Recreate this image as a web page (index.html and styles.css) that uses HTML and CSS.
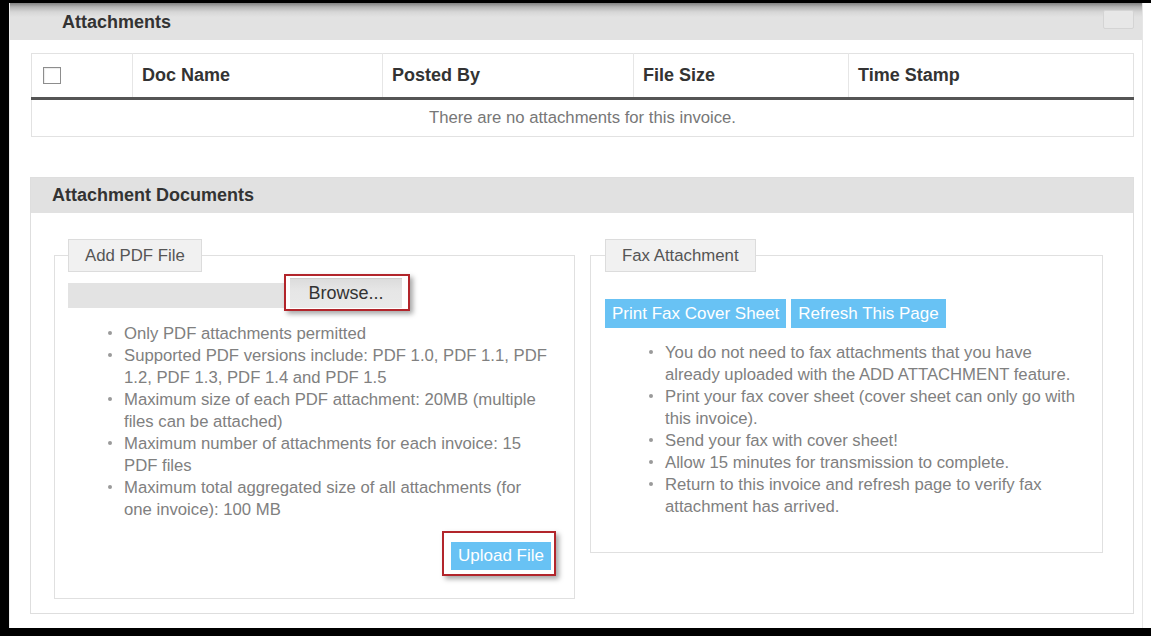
FILE: index.html
```html
<!DOCTYPE html>
<html lang="en">
<head>
<meta charset="utf-8">
<title>Invoice Attachments</title>
<link rel="stylesheet" href="styles.css">
</head>
<body>
<div class="screen">
  <div class="page">
    <section class="attachments">
      <header class="top-bar">
        <h2 class="top-title">Attachments</h2>
        <span class="collapse-btn"></span>
      </header>
      <div class="attachments-body">
        <table class="grid">
          <colgroup>
            <col class="c-check">
            <col class="c-name">
            <col class="c-posted">
            <col class="c-size">
            <col class="c-time">
          </colgroup>
          <thead>
            <tr>
              <th><span class="checkbox"></span></th>
              <th>Doc Name</th>
              <th>Posted By</th>
              <th>File Size</th>
              <th>Time Stamp</th>
            </tr>
          </thead>
          <tbody>
            <tr>
              <td colspan="5" class="empty">There are no attachments for this invoice.</td>
            </tr>
          </tbody>
        </table>
      </div>
    </section>

    <section class="panel">
      <header class="panel-head">
        <h2 class="panel-title">Attachment Documents</h2>
      </header>
      <div class="panel-body">
        <fieldset class="box box-pdf">
          <legend class="box-legend">Add PDF File</legend>
          <div class="file-row">
            <span class="file-name"></span>
            <span class="mark mark-browse"><button type="button" class="browse">Browse...</button></span>
          </div>
          <ul class="notes notes-pdf">
            <li>Only PDF attachments permitted</li>
            <li>Supported PDF versions include: PDF 1.0, PDF 1.1, PDF 1.2, PDF 1.3, PDF 1.4 and PDF 1.5</li>
            <li>Maximum size of each PDF attachment: 20MB (multiple files can be attached)</li>
            <li>Maximum number of attachments for each invoice: 15 PDF files</li>
            <li>Maximum total aggregated size of all attachments (for one invoice): 100 MB</li>
          </ul>
          <div class="actions">
            <span class="mark mark-upload"><button type="button" class="btn">Upload File</button></span>
          </div>
        </fieldset>

        <fieldset class="box box-fax">
          <legend class="box-legend">Fax Attachment</legend>
          <div class="fax-buttons">
            <button type="button" class="btn">Print Fax Cover Sheet</button>
            <button type="button" class="btn">Refresh This Page</button>
          </div>
          <ul class="notes notes-fax">
            <li>You do not need to fax attachments that you have already uploaded with the ADD ATTACHMENT feature.</li>
            <li>Print your fax cover sheet (cover sheet can only go with this invoice).</li>
            <li>Send your fax with cover sheet!</li>
            <li>Allow 15 minutes for transmission to complete.</li>
            <li>Return to this invoice and refresh page to verify fax attachment has arrived.</li>
          </ul>
        </fieldset>
      </div>
    </section>
  </div>
</div>
</body>
</html>
```

FILE: styles.css
```css
html,
body {
  margin: 0;
  padding: 0;
}

body {
  background: #000;
  font-family: "Liberation Sans", Arial, sans-serif;
  color: #333;
}

/* white sheet inside the dark frame */
.screen {
  margin: 3px 0 0 9px;
  height: 625px;
  background: #fff;
  overflow: hidden;
}

.page {
  width: 1134px;
  height: 100%;
  box-sizing: border-box;
  border-left: 1px solid #ececec;
  border-right: 1px solid #e6e6e6;
}

/* ---------- Attachments block ---------- */
.top-bar {
  height: 37px;
  display: flex;
  align-items: center;
  padding-left: 52px;
  background: linear-gradient(to bottom, #808080 0, #b5b5b5 4px, #d6d6d6 9px, #e2e2e2 14px, #e2e2e2 100%);
}

.top-title {
  margin: 0;
  font-size: 18px;
  font-weight: bold;
  color: #333;
  padding-top: 2px;
}

.collapse-btn {
  margin-left: auto;
  margin-right: 8px;
  align-self: flex-start;
  margin-top: 7px;
  width: 29px;
  height: 17px;
  border: 1px solid #d4d4d4;
  border-radius: 2px;
  background: #e7e7e7;
}

.attachments-body {
  padding: 13px 8px 0 21px;
}

.grid {
  width: 1102px;
  border-collapse: collapse;
  table-layout: fixed;
  border: 1px solid #e2e2e2;
}

.c-check { width: 101px; }
.c-name { width: 250px; }
.c-posted { width: 251px; }
.c-size { width: 215px; }
.c-time { width: 285px; }

.grid th {
  height: 43px;
  padding: 0 0 0 9px;
  text-align: left;
  font-size: 18px;
  font-weight: bold;
  color: #333;
  border-right: 1px solid #e6e6e6;
  border-bottom: 3px solid #555;
}

.grid th:first-child {
  padding-left: 11px;
}

.grid th:last-child {
  border-right: none;
}

.checkbox {
  display: block;
  width: 16px;
  height: 15px;
  border: 1px solid #8d8d8d;
  background: #fff;
  box-shadow: inset 1px 1px 1px rgba(0, 0, 0, 0.08);
}

.grid td.empty {
  height: 36px;
  padding: 0;
  text-align: center;
  font-size: 16.7px;
  color: #777;
}

/* ---------- Attachment Documents block ---------- */
.panel {
  margin: 40px 0 0 20px;
  width: 1104px;
  box-sizing: border-box;
  border: 1px solid #dedede;
}

.panel-head {
  height: 35px;
  display: flex;
  align-items: center;
  padding-left: 21px;
  background: #e1e1e1;
}

.panel-title {
  margin: 0;
  font-size: 18px;
  font-weight: bold;
  color: #333;
}

.panel-body {
  display: grid;
  grid-template-columns: 521px 513px;
  column-gap: 15px;
  align-items: start;
  padding: 26px 0 14px 23px;
}

.box {
  margin: 0;
  min-width: 0;
  border: 1px solid #e0e0e0;
  padding: 0 13px 22px 13px;
}

.box-fax {
  padding-left: 14px;
  padding-bottom: 34px;
}

.box-legend {
  padding: 0 16px;
  height: 31px;
  line-height: 31px;
  font-size: 16.8px;
  color: #555;
  background: #f1f1f1;
  border: 1px solid #dcdcdc;
}

/* file chooser row */
.file-row {
  display: flex;
  align-items: flex-start;
  margin-top: 2px;
}

.file-name {
  width: 216px;
  height: 25px;
  margin-top: 9px;
  background: #e3e3e3;
}

.mark {
  display: inline-block;
  border: 2px solid #b2252b;
  box-shadow: 3px 3px 5px rgba(0, 0, 0, 0.35);
}

.mark-browse {
  padding: 2px 6px 1px 4px;
}

.browse {
  display: block;
  width: 112px;
  height: 30px;
  margin: 0;
  padding: 0;
  border: none;
  border-top: 1px solid #cdcdcd;
  background: linear-gradient(to bottom, #dcdcdc 0, #e6e6e6 40%, #e9e9e9 100%);
  font-family: "Liberation Sans", Arial, sans-serif;
  font-size: 18px;
  color: #333;
}

/* bullet notes */
.notes {
  list-style: none;
  margin: 12px 0 0;
  padding: 0 11px 0 56px;
  font-size: 16.7px;
  line-height: 22px;
  color: #808080;
}

.notes li::before {
  content: "";
  display: inline-block;
  width: 4px;
  height: 4px;
  border-radius: 50%;
  background: #9a9a9a;
  margin-left: -16px;
  margin-right: 12px;
  vertical-align: 4px;
}

.notes-fax {
  margin-top: 14px;
  padding-left: 60px;
  padding-right: 0;
}

/* buttons */
.btn {
  margin: 0;
  height: 29px;
  padding: 0 7px;
  border: none;
  background: #68c2f4;
  color: #fff;
  font-family: "Liberation Sans", Arial, sans-serif;
  font-size: 17px;
}

.actions {
  display: flex;
  justify-content: flex-end;
  margin: 10px 5px 0 0;
}

.mark-upload {
  padding: 9px 3px 4px 7px;
}

.mark-upload .btn {
  display: block;
  height: 28px;
}

.fax-buttons {
  display: flex;
  gap: 5px;
  margin-top: 27px;
}
```
